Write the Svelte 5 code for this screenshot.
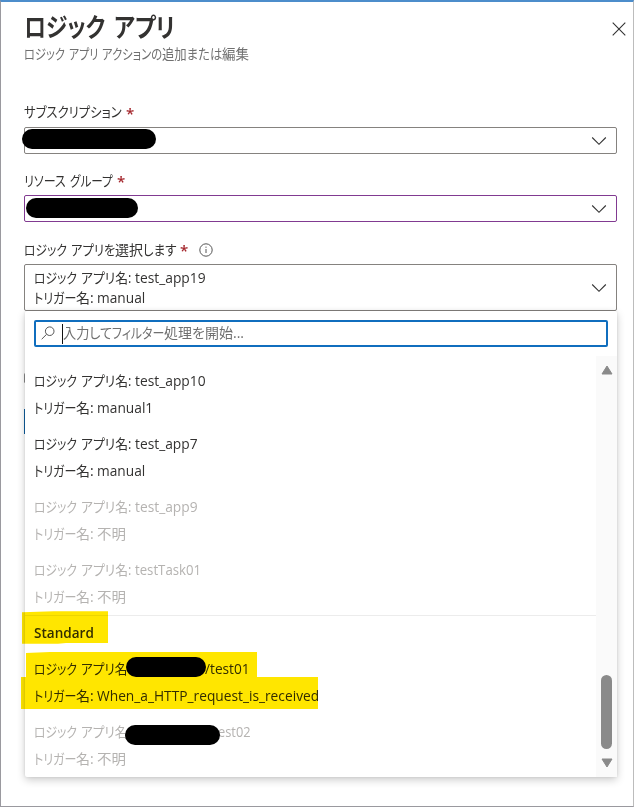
<script>
  // Each text run is a list of [text, advance width] pairs.
  const item1 = (name, w) => [['ロジック', 43], ['', 4], ['アプリ名: ', 54], [name, w]];
  const item2 = (name, w) => [['トリガー', 42], ['名: ', 21], [name, w]];

  const items = [
    { a: item1('test_app10', 71), b: item2('manual1', 56) },
    { a: item1('test_app7', 63), b: item2('manual', 48) },
    { a: item1('test_app9', 63), b: item2('不明', 29), off: true },
    { a: item1('testTask01', 66), b: item2('不明', 29), off: true }
  ];
  const standard = [
    {
      a: [['ロジック', 43], ['', 4], ['アプリ名', 46], ['', 78], ['/test01', 45]],
      b: item2('When_a_HTTP_request_is_received', 222)
    },
    {
      a: [['ロジック', 43], ['', 4], ['アプリ名', 46], ['', 91], ['est02', 33]],
      b: item2('不明', 29),
      off: true
    }
  ];

  function fit(node, width) {
    const natural = node.offsetWidth;
    if (natural) node.style.transform = `scaleX(${width / natural})`;
  }
</script>

{#snippet run(parts)}
  <span class="run">{#each parts as [text, width]}<span class="cell" style="width:{width}px"><span class="glyphs" use:fit={width}>{text}</span></span>{/each}</span>
{/snippet}

{#snippet chevron()}
  <svg class="chevron" width="16" height="10" viewBox="0 0 16 10"><path d="M1.2 1.5 8 8.3l6.8-6.8" /></svg>
{/snippet}

{#snippet option(o)}
  <div class="option" class:off={o.off}>
    <div class="line">{@render run(o.a)}</div>
    <div class="line">{@render run(o.b)}</div>
  </div>
{/snippet}

<main class="blade">
  <header>
    <div>
      <h1>{@render run([['ロジック', 81], ['', 9], ['アプリ', 61]])}</h1>
      <p>{@render run([['ロジック', 41], ['', 4], ['アプリ', 29], ['', 4], ['アクションの', 60], ['追加または', 60], ['編集', 27]])}</p>
    </div>
    <svg class="close" width="14" height="14" viewBox="0 0 14 14"><path d="M.7.7l12.6 12.6M13.3.7.7 13.3" /></svg>
  </header>

  <section class="field">
    <div class="label first">{@render run([['サブスクリプション', 98]])}<b>*</b></div>
    <div class="box">{@render chevron()}<i class="ink sub"></i></div>
  </section>

  <section class="field">
    <div class="label">{@render run([['リソース', 42], ['', 4], ['グループ', 43]])}<b>*</b></div>
    <div class="box visited">{@render chevron()}<i class="ink group"></i></div>
  </section>

  <section class="field app">
    <div class="label">
      {@render run([['ロジック', 43], ['', 4], ['アプリを', 44], ['選択', 28], ['します', 33]])}<b>*</b>
      <svg class="info" width="14" height="14" viewBox="0 0 14 14"><circle cx="7" cy="7" r="6.2" /><path d="M7 6v4M7 3.6v1.2" /></svg>
    </div>
    <div class="box tall">
      <div class="value">
        <div>{@render run(item1('test_app19', 71))}</div>
        <div>{@render run(item2('manual', 48))}</div>
      </div>
      {@render chevron()}
    </div>

    <i class="peek radio"></i>
    <i class="peek button"></i>
    <div class="panel">
      <div class="search">
        <svg width="14" height="14" viewBox="0 0 14 14"><circle cx="8.7" cy="5.2" r="4.3" /><path d="M5.6 8.3.7 13.2" /></svg>
        <div class="placeholder">{@render run([['入力して', 49], ['フィルター', 52], ['処理を', 41], ['開始', 28], ['...', 11]])}</div>
      </div>
      <div class="scroll">
        <div class="list">
          {#each items as o}{@render option(o)}{/each}
          <div class="group-title">{@render run([['Standard', 60]])}</div>
          {#each standard as o}{@render option(o)}{/each}
        </div>
        <div class="track">
          <svg width="12" height="10" viewBox="0 0 12 10"><path d="M6 1 11 9H1z" /></svg>
          <div class="thumb"></div>
          <svg width="12" height="10" viewBox="0 0 12 10"><path d="M6 9 11 1H1z" /></svg>
        </div>
      </div>
    </div>
  </section>

  <svg class="marks" width="634" height="807" viewBox="0 0 634 807">
    <path d="M22 612.3 54 611.3H108V643H66L58 643.7H22zM26 653 50 652H257V677H318V709H21V677H26z" />
  </svg>
  <i class="ink one"></i>
  <i class="ink two"></i>
</main>

<style>
  :global(body) { margin: 0; background: #fff; }
  .blade {
    position: relative;
    box-sizing: border-box;
    width: 634px;
    height: 807px;
    padding: 10px 16px 0 23px;
    overflow: hidden;
    background: #fff;
    border: 1px solid #9a999f;
    border-right-color: #bcbcbc;
    border-top: 2px solid #4c8dcb;
    font-family: 'Open Sans', 'Noto Sans CJK JP', sans-serif;
    font-size: 14px;
    color: #333231;
  }
  .run { display: inline-flex; white-space: pre; }
  .cell { display: block; flex: none; }
  .glyphs { display: inline-block; transform-origin: 0 50%; font-feature-settings: 'palt'; }

  header { display: flex; justify-content: space-between; height: 87px; }
  h1 { margin: 0; font-size: 26px; line-height: 30px; height: 31px; font-weight: 700; }
  p { margin: 0; height: 22px; line-height: 22px; color: #707070; }
  .close { margin: 10px -9px 0 0; fill: none; stroke: #333; stroke-width: 1.1; }

  .field { height: 68px; }
  .label { display: flex; align-items: center; height: 28px; line-height: 28px; }
  .first .run { margin-top: -2px; }
  .label b { margin-left: 4px; width: 8px; font-weight: 600; font-size: 15px; color: #a4262c; }
  .info { margin-left: 11px; fill: none; stroke: #555; stroke-width: 1; }
  .box {
    position: relative;
    box-sizing: border-box;
    display: flex;
    align-items: center;
    justify-content: flex-end;
    width: 593px;
    height: 27px;
    padding-right: 9px;
    border: 1px solid #85827f;
    border-radius: 2px;
  }
  .visited { border-color: #813a91; }
  .tall { height: 47px; justify-content: space-between; }
  .value { padding-left: 9px; line-height: 20px; }
  .value div { height: 20px; }
  .chevron { fill: none; stroke: #333; stroke-width: 1.1; }

  .app { position: relative; padding-top: 1px; }
  .panel {
    position: absolute;
    top: 76px;
    left: 1px;
    box-sizing: border-box;
    width: 592px;
    height: 466px;
    padding-top: 9px;
    background: #fff;
    border-radius: 2px;
    box-shadow: 0 3px 8px rgba(0, 0, 0, .2), 0 0 3px rgba(0, 0, 0, .1);
  }
  .peek { position: absolute; left: 0; width: 3px; }
  .radio { top: 138px; height: 10px; border-radius: 4px; background: #888; }
  .button { top: 174px; height: 25px; background: #0f5f9e; }
  .search {
    box-sizing: border-box;
    display: flex;
    align-items: center;
    width: 574px;
    height: 27px;
    margin-left: 9px;
    padding-left: 5px;
    border: 2px solid #106ebe;
    border-radius: 2px;
  }
  .search svg { margin-top: -2px; fill: none; stroke: #555; stroke-width: 1; }
  .placeholder { margin-left: 7px; height: 20px; line-height: 18px; border-left: 1px solid #111; color: #707070; }
  .scroll { display: flex; height: 430px; }
  .list { width: 571px; padding-top: 20px; }
  .option { height: 54px; margin-bottom: 9px; padding-left: 9px; }
  .line { height: 27px; line-height: 27px; }
  .off { color: #b5b3b1; }
  .group-title {
    box-sizing: border-box;
    height: 40px;
    margin-top: -4px;
    padding-left: 9px;
    border-top: 1px solid #ececec;
    line-height: 33px;
    font-weight: 600;
  }
  .track {
    box-sizing: border-box;
    display: flex;
    flex-direction: column;
    align-items: center;
    width: 21px;
    height: 421px;
    margin-top: 9px;
    padding-top: 9px;
    background: #fafafa;
  }
  .track svg { fill: #8a8a8a; stroke: #8a8a8a; stroke-width: 1; stroke-linejoin: round; }
  .thumb { width: 11px; height: 74px; margin: 300px 0 9px; border-radius: 6px; background: #8a8a8a; }

  .marks { position: absolute; left: -1px; top: -2px; mix-blend-mode: multiply; fill: #ffe600; }
  .ink { position: absolute; height: 20px; border-radius: 10px; background: #000; }
  .sub { left: -3px; top: 1px; width: 134px; }
  .group { left: 1px; top: 2px; width: 112px; }
  .one { left: 125px; top: 655px; width: 80px; }
  .two { left: 124px; top: 723px; width: 95px; }
</style>
